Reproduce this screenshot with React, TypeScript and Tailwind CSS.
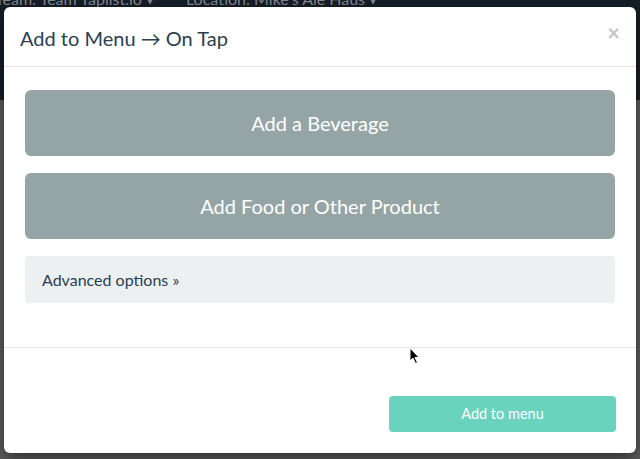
export default function App() {
  return (
    <div
      className="relative w-[640px] h-[459px] overflow-hidden bg-[#5c5c5c]"
      style={{ fontFamily: "Lato, 'Noto Sans', sans-serif" }}
    >
      {/* page behind the backdrop */}
      <div className="h-[100px] bg-[#161e27] flex flex-col">
        <div className="flex gap-[32px] -mt-[9px] -ml-[5px] text-[16px] leading-none text-[#848b93]">
          <span>Team: Team Taplist.io ▾</span>
          <span>Location: Mike's Ale Haus ▾</span>
        </div>
      </div>

      {/* modal */}
      <div className="absolute left-[4px] top-[7px] w-[632px] h-[446px] bg-white rounded-[6px] shadow-[0_5px_15px_rgba(0,0,0,0.5)] flex flex-col">
        <div className="h-[60px] flex items-center justify-between pl-[16px] pr-[16px] border-b border-[#e5e5e5]">
          <h4 className="text-[20px] text-[#2c3e50] leading-none pt-[2px]">
            Add to Menu → On Tap
          </h4>
          <span className="text-[22px] font-bold text-[#c4c4c4] leading-none -mt-[8px]">×</span>
        </div>

        <div className="px-[21px] pt-[23px] flex flex-col gap-[17px]">
          <button className="h-[66px] w-full rounded-[6px] bg-[#95a5a6] text-white text-[20px]">
            Add a Beverage
          </button>
          <button className="h-[66px] w-full rounded-[6px] bg-[#95a5a6] text-white text-[20px]">
            Add Food or Other Product
          </button>
          <div className="h-[47px] rounded-[4px] bg-[#ecf0f1] flex items-center px-[17px] text-[16px] text-[#2c3e50]">
            Advanced options »
          </div>
        </div>

        <div className="mt-[44px] border-t border-[#e5e5e5] flex-1 flex items-start justify-end px-[20px] pt-[48px]">
          <button className="w-[227px] h-[36px] rounded-[4px] bg-[#69d3be] text-white text-[14.5px]">
            Add to menu
          </button>
        </div>
      </div>

      {/* mouse cursor */}
      <svg
        className="absolute left-[409px] top-[347px]"
        width="12"
        height="18"
        viewBox="0 0 12 18"
      >
        <path
          d="M1 1 L1 14 L4 11 L6.5 16.5 L8.5 15.5 L6 10.5 L10 10.5 Z"
          fill="#000"
          stroke="#fff"
          strokeWidth="1"
        />
      </svg>
    </div>
  );
}
